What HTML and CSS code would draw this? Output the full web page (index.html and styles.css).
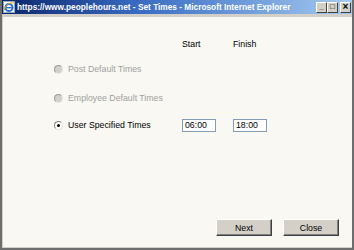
FILE: index.html
```html
<!DOCTYPE html>
<html lang="en">
<head>
    <meta charset="UTF-8">
    <title>Set Times</title>
    <link rel="stylesheet" href="styles.css">
</head>
<body>
    <div class="window">
        <div class="titlebar">
            <svg class="ie-icon" width="12" height="12" viewBox="0 0 12 12">
                <rect x="0.5" y="0.5" width="11" height="11" fill="#fff" stroke="#9ab" />
                <circle cx="6" cy="6.5" r="3.6" fill="none" stroke="#2a6fd6" stroke-width="2" />
                <rect x="3" y="6" width="6" height="1.4" fill="#2a6fd6" />
                <path d="M1 9.5 C3 3, 8 1, 11 2" fill="none" stroke="#e8a400" stroke-width="1" />
            </svg>
            <span class="title">https://www.peoplehours.net - Set Times - Microsoft Internet Explorer</span>
            <div class="caption-buttons">
                <span class="cap-btn">_</span>
                <span class="cap-btn">&#9633;</span>
                <span class="cap-btn close-x">&#215;</span>
            </div>
        </div>
        <div class="content">
            <div class="times-grid">
                <div class="row header">
                    <span></span>
                    <span class="col-label">Start</span>
                    <span class="col-label">Finish</span>
                </div>
                <div class="row row-post">
                    <label class="option disabled"><span class="radio"></span>Post Default Times</label>
                </div>
                <div class="row row-emp">
                    <label class="option disabled"><span class="radio"></span>Employee Default Times</label>
                </div>
                <div class="row row-user">
                    <label class="option"><span class="radio checked"></span>User Specified Times</label>
                    <span class="time-box">06:00</span>
                    <span class="time-box">18:00</span>
                </div>
            </div>
            <div class="actions">
                <button class="btn">Next</button>
                <button class="btn">Close</button>
            </div>
        </div>
    </div>
</body>
</html>
```

FILE: styles.css
```css
body {
    margin: 0;
    font-family: "Liberation Sans", Arial, sans-serif;
    font-size: 8.75px;
    background: #f9f8f3;
}

.window {
    width: 354px;
    height: 250px;
    box-sizing: border-box;
    display: flex;
    flex-direction: column;
    background: #d4d0c8;
    border-left: 2px solid #6e6e6e;
    border-right: 2px solid #6e6e6e;
    border-bottom: 2px solid #6e6e6e;
}

.titlebar {
    height: 14px;
    display: flex;
    align-items: center;
    background: linear-gradient(to right, #0a246a, #3a6ec4 40%, #a6caf0);
    color: white;
    padding-left: 1px;
}

.ie-icon {
    flex: none;
    margin-right: 2px;
}

.title {
    font-weight: bold;
    font-size: 8.3px;
    white-space: nowrap;
    flex: 1;
}

.caption-buttons {
    display: flex;
    margin-right: 1px;
}

.cap-btn {
    width: 11px;
    height: 11px;
    box-sizing: border-box;
    background: #d4d0c8;
    border: 1px solid;
    border-color: #fff #404040 #404040 #fff;
    color: #000;
    font-size: 8px;
    line-height: 8px;
    text-align: center;
    font-weight: bold;
}

.cap-btn.close-x {
    margin-left: 2px;
    font-size: 10px;
}

.content {
    flex: 1;
    margin: 3px 0 1px 1px;
    background: #f9f8f3;
    display: flex;
    flex-direction: column;
    padding: 21px 13px 11px 51px;
}

.times-grid {
    display: flex;
    flex-direction: column;
    flex: 1;
}

.row {
    display: grid;
    grid-template-columns: 128px 51px 50px;
    align-items: start;
}

.row.header { height: 24px; line-height: 12px; }
.row.row-post { height: 29px; }
.row.row-emp { height: 27px; }
.row.row-user { height: 14px; align-items: center; }

.col-label {
    color: #000;
}

.option {
    display: flex;
    align-items: center;
    height: 14px;
    color: #000;
    white-space: nowrap;
}

.option.disabled {
    color: #a0a0a0;
}

.radio {
    width: 9px;
    height: 9px;
    box-sizing: border-box;
    border-radius: 50%;
    border: 1px solid #808080;
    border-right-color: #e0e0e0;
    border-bottom-color: #e0e0e0;
    background: #fff;
    margin: 0 5px 0 0;
    position: relative;
}

.option.disabled .radio {
    background: #d4d0c8;
    border-color: #9a9a9a #e8e8e8 #e8e8e8 #9a9a9a;
}

.radio.checked::after {
    content: "";
    position: absolute;
    left: 2px;
    top: 2px;
    width: 3px;
    height: 3px;
    border-radius: 50%;
    background: #000;
}

.time-box {
    width: 34px;
    height: 13px;
    box-sizing: border-box;
    border: 1px solid #7f9db9;
    background: #fff;
    line-height: 11px;
    padding-left: 2px;
    color: #000;
}

.actions {
    display: flex;
    justify-content: flex-end;
    gap: 11px;
}

.btn {
    width: 56px;
    height: 17px;
    padding: 0;
    background: #d4d0c8;
    border: 1px solid;
    border-color: #fff #404040 #404040 #fff;
    box-shadow: inset -1px -1px 0 #808080;
    font-family: "Liberation Sans", Arial, sans-serif;
    font-size: 8.75px;
    color: #000;
}
```
